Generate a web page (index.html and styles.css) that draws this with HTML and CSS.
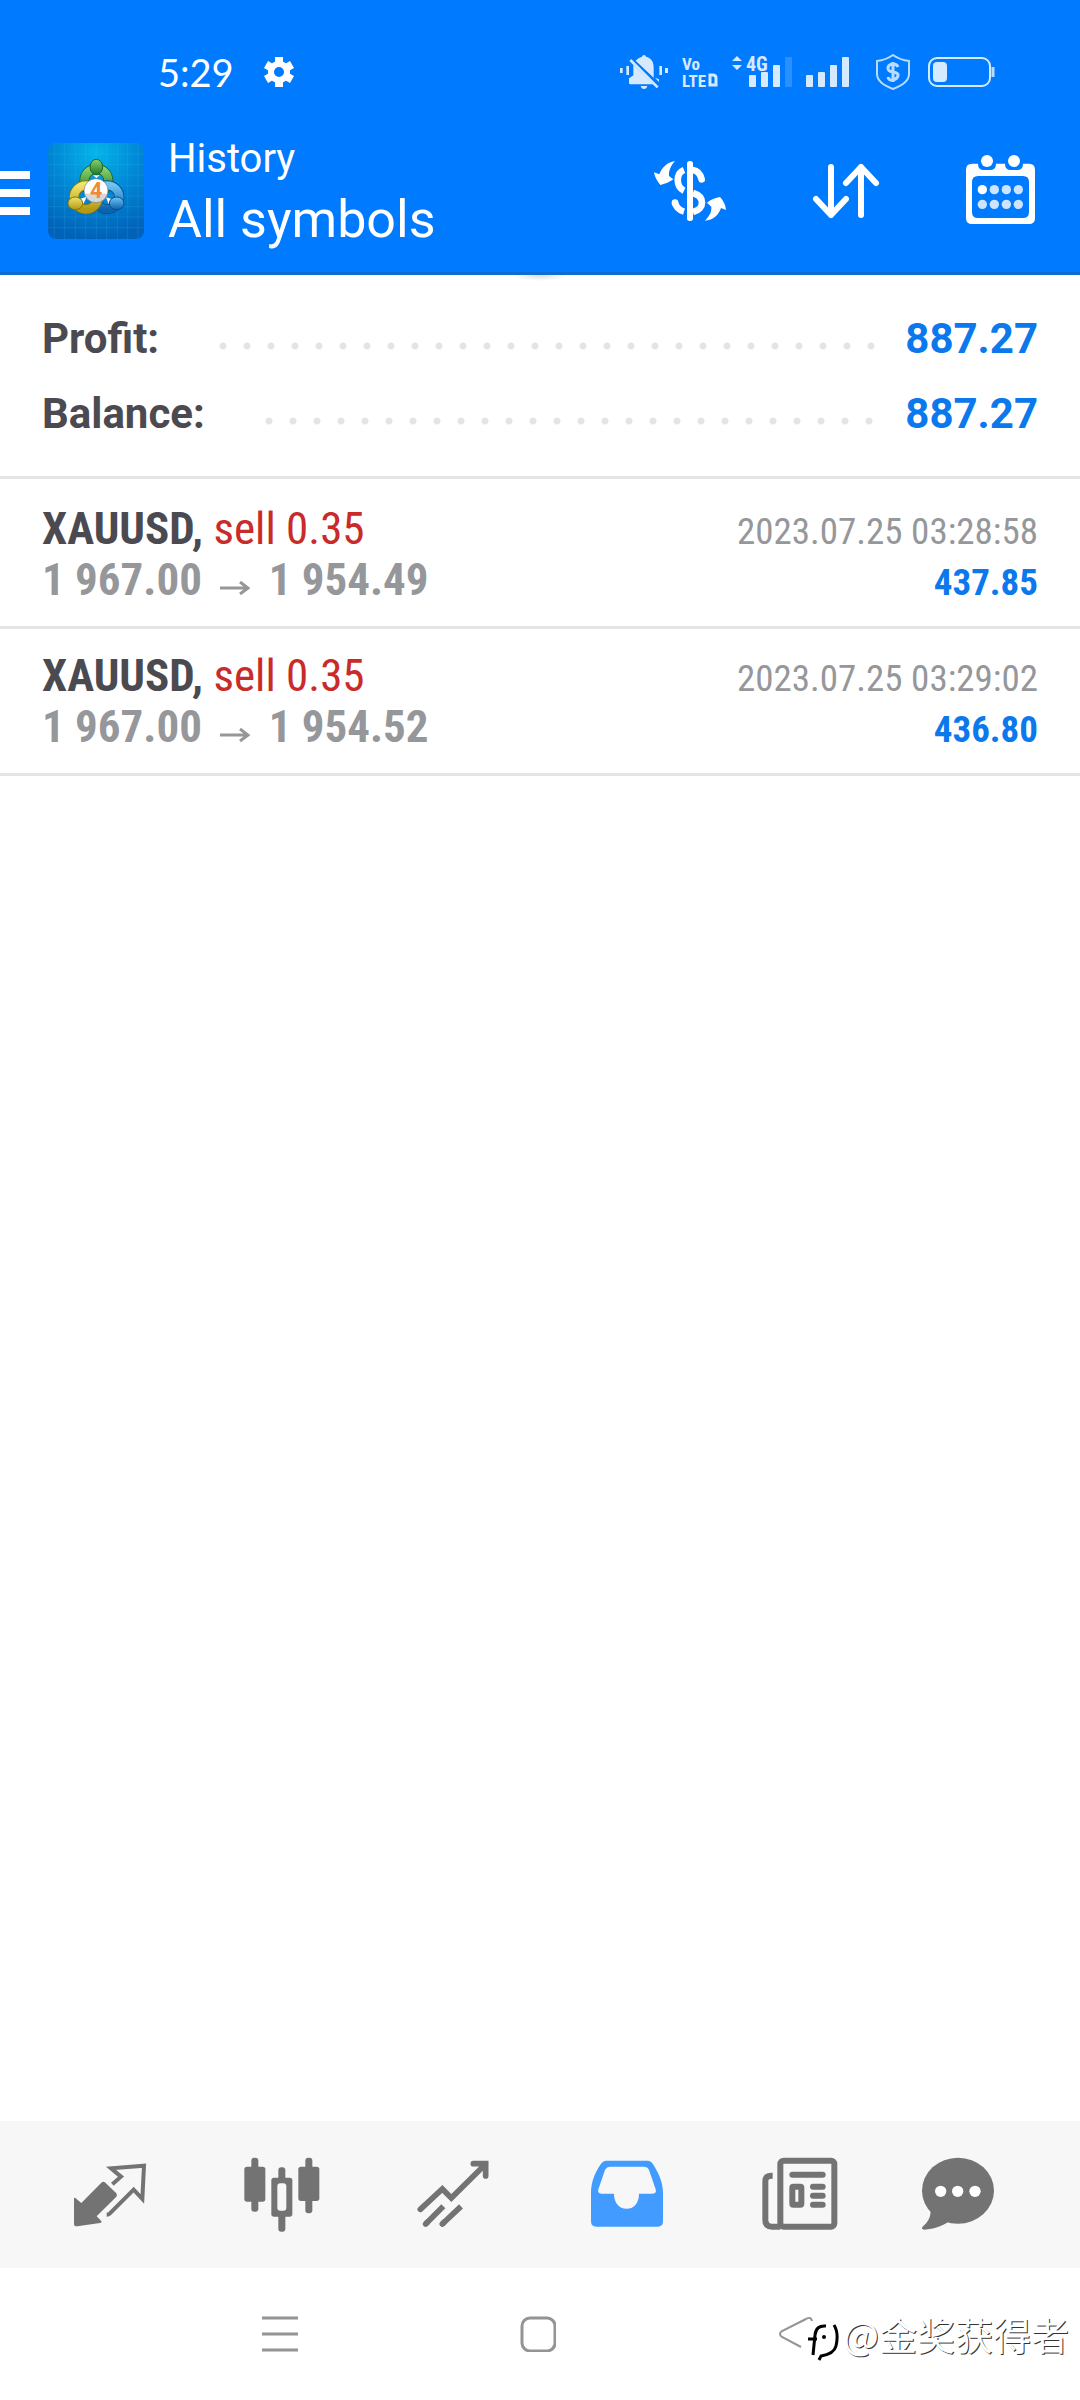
FILE: index.html
```html
<!DOCTYPE html>
<html lang="en">
<head>
    <meta charset="UTF-8">
    <meta name="viewport" content="width=device-width, initial-scale=1.0">
    <title>History</title>
    <link rel="stylesheet" href="styles.css">
</head>
<body>
    <header class="header">
        <div class="status-bar">
            <span class="clock">5:29</span>
            <svg class="gear" viewBox="0 0 30 30">
                <circle cx="15" cy="15" r="8" fill="none" stroke="#fff" stroke-width="6"/>
                <path d="M15 0V6M15 24V30M2 7.500L7.200 10.500M22.800 19.500L28 22.500M2 22.500L7.200 19.500M22.800 10.500L28 7.500" stroke="#fff" stroke-width="8"/>
            </svg>
            <div class="status-icons">
                <svg width="48" height="36" viewBox="60 72 144 108" fill="#d5eaff">
                    <rect x="60" y="114" width="8" height="15"/>
                    <rect x="79" y="108" width="8" height="27"/>
                    <rect x="178" y="108" width="8" height="27"/>
                    <rect x="195" y="114" width="9" height="15"/>
                    <path d="M107 92C112 86 119 82 126 80Q127 75 132 75T138 80C154 84 161 96 161 112V143ZM100 104L160 163H91Q87 163 87 158V145L100 136ZM165 143L177 148V156Z"/>
                    <path d="M91 90L173 172" stroke="#d5eaff" stroke-width="8"/>
                    <path d="M122 168H142Q140 177 132 177T122 168Z"/>
                </svg>
                <svg class="volte" width="36" height="36" viewBox="0 0 36 36">
                    <text x="0" y="16">Vo</text>
                    <text x="0" y="33">LTE</text>
                    <path d="M28 21H31Q34 21 34 24V31H28Z" fill="none" stroke="#d5eaff" stroke-width="3"/>
                </svg>
                <svg class="network" width="60" height="36" viewBox="0 0 60 36">
                    <path d="M0 7L5 2L10 7ZM0 11L5 16L10 11Z"/>
                    <text x="14" y="17">4G</text>
                    <rect x="17" y="21" width="7" height="12" rx="1"/>
                    <rect x="29" y="18" width="7" height="15" rx="1"/>
                    <rect x="41" y="11" width="7" height="22" rx="1"/>
                    <rect x="53" y="3" width="7" height="30" rx="1" opacity=".2"/>
                </svg>
                <svg width="43" height="36" viewBox="0 0 43 36" fill="#d5eaff">
                    <rect x="0" y="21" width="7" height="12" rx="1"/>
                    <rect x="12" y="18" width="7" height="15" rx="1"/>
                    <rect x="24" y="11" width="7" height="22" rx="1"/>
                    <rect x="36" y="3" width="7" height="30" rx="1"/>
                </svg>
                <svg class="shield" width="36" height="36" viewBox="0 0 36 36">
                    <path d="M18 1Q25 6 34 7V20C34 28 26 32 18 35C10 32 2 28 2 20V7Q11 6 18 1Z" fill="none" stroke="#b8dcff" stroke-width="2"/>
                    <path d="M23 13Q22 10 18 10T13 13.500T18 18T23 22T18 26T13 23M18 8V28" fill="none" stroke="#b8dcff" stroke-width="3"/>
                </svg>
                <svg width="67" height="36" viewBox="0 0 67 36">
                    <rect x="1" y="4" width="61" height="28" rx="8" fill="none" stroke="#d5eaff" stroke-width="2"/>
                    <rect x="5" y="8" width="14" height="20" rx="4" fill="#d5eaff"/>
                    <path d="M65 13V23" stroke="#b8dcff" stroke-width="3"/>
                </svg>
            </div>
        </div>
        <div class="toolbar">
            <button class="menu" aria-label="Menu">
                <svg width="30" height="44" viewBox="0 0 30 44"><path d="M0 4H30M0 22H30M0 40H30" stroke="#fff" stroke-width="8"/></svg>
            </button>
            <svg class="logo" viewBox="144 69 288 288">
                <defs>
                    <radialGradient id="sky" cx=".5" cy=".1" r=".9">
                        <stop offset="0" stop-color="#04b5ea"/>
                        <stop offset=".5" stop-color="#0087d6"/>
                        <stop offset="1" stop-color="#0062b8"/>
                    </radialGradient>
                    <linearGradient id="green" x2="0" y2="1"><stop offset="0" stop-color="#8bd06c"/><stop offset="1" stop-color="#1e7a2b"/></linearGradient>
                    <linearGradient id="yellow" x2="0" y2="1"><stop offset="0" stop-color="#f0e36a"/><stop offset="1" stop-color="#b39a12"/></linearGradient>
                    <linearGradient id="blue" x2="0" y2="1"><stop offset="0" stop-color="#6cc5f2"/><stop offset="1" stop-color="#0b63b0"/></linearGradient>
                    <linearGradient id="badge" x2="0" y2="1"><stop offset=".6" stop-color="#fff"/><stop offset=".65" stop-color="#d5d8da"/></linearGradient>
                </defs>
                <rect x="144" y="69" width="288" height="288" rx="24" fill="url(#sky)"/>
                <path d="M163 69V357M194 69V357M226 69V357M257 69V357M289 69V357M320 69V357M352 69V357M383 69V357M414 69V357M144 102H432M144 134H432M144 165H432M144 197H432M144 228H432M144 260H432M144 291H432M144 323H432" stroke="#4fc0ee" stroke-opacity=".25" stroke-width="2"/>
                <circle cx="289" cy="182" r="36" fill="none" stroke="#1d6428" stroke-width="30"/>
                <circle cx="289" cy="182" r="36" fill="none" stroke="url(#green)" stroke-width="25"/>
                <circle cx="322" cy="232" r="36" fill="none" stroke="#0a4d8c" stroke-width="30"/>
                <circle cx="322" cy="232" r="36" fill="none" stroke="url(#blue)" stroke-width="25"/>
                <circle cx="258" cy="232" r="36" fill="none" stroke="#857414" stroke-width="30"/>
                <circle cx="258" cy="232" r="36" fill="none" stroke="url(#yellow)" stroke-width="25"/>
                <path d="M242 236L260 230L250 252ZM318 232L337 238L326 252ZM279 166H299L289 174Z" fill="#fff"/>
                <ellipse cx="289" cy="141" rx="19" ry="23" fill="url(#green)" stroke="#1d6428" stroke-width="3"/>
                <ellipse cx="226" cy="250" rx="22" ry="19" fill="url(#yellow)" stroke="#857414" stroke-width="3"/>
                <ellipse cx="350" cy="250" rx="22" ry="19" fill="url(#blue)" stroke="#0a4d8c" stroke-width="3"/>
                <circle cx="288" cy="212" r="36" fill="url(#badge)" stroke="#777" stroke-width="2"/>
                <text class="logo-digit" x="288" y="235">4</text>
            </svg>
            <div class="titles">
                <div class="title">History</div>
                <h1 class="subtitle">All symbols</h1>
            </div>
            <button aria-label="Currency">
                <svg width="72" height="72" viewBox="102 75 216 216">
                    <rect x="201" y="93" width="18" height="180" rx="8" fill="#fff"/>
                    <path d="M192 120C167 130 167 170 192 182M165 218C168 232 175 240 192 245M219 189C255 200 255 236 219 246" fill="none" stroke="#fff" stroke-width="20"/>
                    <path d="M219 120C234 122 241 132 245 148M165 218V219M219 120" fill="none" stroke="#fff" stroke-width="20" stroke-linecap="round"/>
                    <path d="M165 93C150 110 146 125 147 138L160 148C145 158 135 162 121 165C110 152 104 140 102 127L118 133C126 112 140 98 165 93Z" fill="#fff"/>
                    <path d="M255 272C270 256 275 245 274 230L261 218C275 207 288 203 300 201C310 212 317 225 318 240L303 234C296 255 280 270 255 272Z" fill="#fff"/>
                </svg>
            </button>
            <button aria-label="Sort">
                <svg width="72" height="72" viewBox="570 75 216 216">
                    <path d="M633 111V255M588 207L633 255L678 207M723 255V111M678 159L723 111L768 159" fill="none" stroke="#fff" stroke-width="18" stroke-linecap="round" stroke-linejoin="round"/>
                </svg>
            </button>
            <button aria-label="Period">
                <svg width="72" height="72" viewBox="1038 75 216 216" fill="#fff">
                    <path fill-rule="evenodd" d="M1056 101H1074Q1074 120 1092 120H1110Q1128 120 1128 101H1155Q1155 120 1173 120H1191Q1209 120 1209 101H1227Q1245 101 1245 119V264Q1245 282 1227 282H1056Q1038 282 1038 264V119Q1038 101 1056 101ZM1074 138Q1056 138 1056 156V246Q1056 264 1074 264H1209Q1227 264 1227 246V156Q1227 138 1209 138Z"/>
                    <circle cx="1101" cy="93" r="18"/>
                    <circle cx="1182" cy="93" r="18"/>
                    <circle cx="1087" cy="179" r="14"/>
                    <g fill="#cce4ff">
                        <circle cx="1123" cy="179" r="14"/>
                        <circle cx="1159" cy="179" r="14"/>
                        <circle cx="1195" cy="179" r="14"/>
                        <circle cx="1087" cy="223" r="14"/>
                        <circle cx="1123" cy="223" r="14"/>
                        <circle cx="1159" cy="223" r="14"/>
                        <circle cx="1195" cy="223" r="14"/>
                    </g>
                </svg>
            </button>
        </div>
    </header>

    <main class="content">
        <div class="summary">
            <div class="summary-row">
                <span>Profit:</span>
                <span class="dots"></span>
                <span class="amount">887.27</span>
            </div>
            <div class="summary-row">
                <span>Balance:</span>
                <span class="dots"></span>
                <span class="amount">887.27</span>
            </div>
        </div>
        <ul class="deals">
            <li class="deal">
                <div class="deal-row">
                    <span class="symbol">XAUUSD, <span class="sell">sell 0.35</span></span>
                    <span class="time">2023.07.25 03:28:58</span>
                </div>
                <div class="deal-row">
                    <span class="price">1 967.00 <svg class="arrow" viewBox="0 0 30 14"><path d="M0 7H26M20 1L28 7L20 13" fill="none" stroke="#96979b" stroke-width="3"/></svg> 1 954.49</span>
                    <span class="profit">437.85</span>
                </div>
            </li>
            <li class="deal">
                <div class="deal-row">
                    <span class="symbol">XAUUSD, <span class="sell">sell 0.35</span></span>
                    <span class="time">2023.07.25 03:29:02</span>
                </div>
                <div class="deal-row">
                    <span class="price">1 967.00 <svg class="arrow" viewBox="0 0 30 14"><path d="M0 7H26M20 1L28 7L20 13" fill="none" stroke="#96979b" stroke-width="3"/></svg> 1 954.52</span>
                    <span class="profit">436.80</span>
                </div>
            </li>
        </ul>
    </main>

    <nav class="tabs">
        <button aria-label="Quotes">
            <svg viewBox="90 133 240 240">
                <path d="M102 264Q102 259 106 262L124 277L184 216Q190 210 196 216L229 248Q233 253 229 258L170 317L183 330Q187 335 180 337L112 347Q102 348 102 339Z" fill="#737373"/>
                <path d="M217 221L243 198L213 173L312 165L307 265L281 237L209 309Q206 312 200 312" fill="none" stroke="#737373" stroke-width="12"/>
            </svg>
        </button>
        <button aria-label="Charts">
            <svg viewBox="608 133 240 240" fill="#737373">
                <rect x="633" y="141" width="21" height="162" rx="9"/>
                <rect x="612" y="168" width="63" height="105" rx="8"/>
                <rect x="795" y="141" width="21" height="167" rx="9"/>
                <rect x="774" y="168" width="63" height="103" rx="8"/>
                <rect x="714" y="170" width="21" height="50" rx="9"/>
                <rect x="714" y="300" width="21" height="63" rx="9"/>
                <rect x="693" y="201" width="63" height="117" rx="8"/>
                <rect x="711" y="218" width="27" height="82" rx="9" fill="#f7f7f7"/>
            </svg>
        </button>
        <button aria-label="Trade">
            <svg viewBox="1126 133 240 240" fill="none" stroke="#737373" stroke-width="17" stroke-linecap="round">
                <path d="M1142 296L1208 235L1235 262L1338 160M1301 159H1338V196"/>
                <path d="M1158 340L1163 335M1208 340L1213 335"/>
                <path d="M1158 340L1211 287M1208 340L1264 287" stroke-linecap="butt"/>
            </svg>
        </button>
        <button aria-label="History">
            <svg viewBox="83 133 240 240">
                <path fill="#429bff" fill-rule="evenodd" d="M92 245C92 215 104 185 120 162Q128 150 138 150H262Q272 150 279 162C294 185 308 215 308 245V332Q308 348 292 348H108Q92 348 92 332ZM150 168Q139 168 134 178L114 236Q111 249 123 249H161C161 275 175 294 199 294C223 294 236 275 236 249H276Q290 249 286 236L266 178Q262 168 250 168Z"/>
            </svg>
        </button>
        <button aria-label="News">
            <svg viewBox="601 133 240 240" fill="none" stroke="#737373" stroke-width="18">
                <rect x="662" y="150" width="162" height="198" rx="10"/>
                <path d="M639 195H636Q617 195 617 211V328Q617 348 637 348H662"/>
                <rect x="698" y="228" width="27" height="54" rx="3"/>
                <path d="M698 192H789M760 228H789M760 255H789M760 282H789" stroke-linecap="round"/>
            </svg>
        </button>
        <button aria-label="Messages">
            <svg viewBox="1074 133 240 240" fill="#737373">
                <ellipse cx="1194" cy="240" rx="108" ry="99"/>
                <path d="M1112 298C1112 325 1100 337 1089 347Q1081 357 1093 357C1125 355 1145 346 1165 334Z"/>
                <g fill="#fff">
                    <circle cx="1142" cy="242" r="17"/>
                    <circle cx="1193" cy="242" r="17"/>
                    <circle cx="1245" cy="242" r="17"/>
                </g>
            </svg>
        </button>
    </nav>

    <footer class="system-nav">
        <button aria-label="Recent apps">
            <svg viewBox="0 0 36 36"><path d="M0 2H36M0 18H36M0 34H36" stroke="#949494" stroke-width="3"/></svg>
        </button>
        <button aria-label="Home">
            <svg viewBox="0 0 36 36"><rect x="2" y="2" width="33" height="33" rx="8" fill="none" stroke="#949494" stroke-width="3"/></svg>
        </button>
        <button aria-label="Back">
            <svg viewBox="0 0 36 36"><path d="M34 5Q33 0 28 3L4 15Q0 18 4 21L23 31" fill="none" stroke="#949494" stroke-width="2"/></svg>
        </button>
        <div class="watermark">
            <svg width="32" height="42" viewBox="0 0 32 42" fill="none">
                <path d="M19 3Q8 2 7 14L4 32M1 17H11M23 3Q31 6 28 19Q27 31 12 37" stroke="#fff" stroke-width="5"/>
                <path d="M19 5Q9 4 8 14L6 34M1 18H10M27 4Q32 12 29 25Q27 33 14 35L12 39" stroke="#000" stroke-width="3"/>
                <circle cx="17" cy="16" r="2" fill="#000"/>
            </svg>
            <span>@金奖获得者</span>
        </div>
    </footer>
</body>
</html>
```
FILE: styles.css
```css
* {
    box-sizing: border-box;
}
body {
    margin: 0;
    min-height: 100vh;
    display: flex;
    flex-direction: column;
    background: #fff;
    color: #4b4a50;
    font-family: Roboto, Arial, sans-serif;
}
button {
    display: flex;
    align-items: center;
    justify-content: center;
    padding: 0;
    border: none;
    background: none;
    cursor: pointer;
}
svg {
    display: block;
    flex-shrink: 0;
}

/* Header */
.header {
    position: relative;
    background: #007aff;
    border-bottom: 3px solid #0d6dd0;
    color: #fff;
}
.header::after {
    content: "";
    position: absolute;
    top: calc(100% + 3px);
    left: 50%;
    width: 56px;
    height: 6px;
    margin-left: -28px;
    background: radial-gradient(ellipse at top, #dcdcdc, #fff 70%);
}
.status-bar {
    display: flex;
    align-items: center;
    padding: 54px 85px 18px 158px;
}
.clock {
    font-family: Lato, sans-serif;
    font-size: 38px;
    line-height: 36px;
}
.gear {
    width: 30px;
    height: 30px;
    margin-left: 30px;
}
.status-icons {
    display: flex;
    gap: 14px;
    margin-left: auto;
}
.status-icons svg {
    overflow: visible;
}
.status-icons text {
    fill: #d5eaff;
    font-family: "Roboto Condensed", Roboto, sans-serif;
    font-weight: bold;
}
.volte text {
    font-size: 17px;
}
.network {
    fill: #d5eaff;
}
.network text {
    font-size: 20px;
}
.shield {
    margin: 0 3px 0 12px;
}
.toolbar {
    display: flex;
    align-items: center;
    gap: 84px;
    height: 164px;
    padding: 2px 42px 0 0;
}
.menu {
    margin-right: -66px;
    padding-top: 4px;
}
.logo {
    width: 96px;
    height: 96px;
    margin-right: -60px;
}
.logo-digit {
    fill: #f08a35;
    font-size: 64px;
    font-weight: bold;
    text-anchor: middle;
}
.titles {
    flex: 1;
    padding-top: 4px;
}
.title {
    font-size: 40px;
    line-height: 54px;
}
.subtitle {
    margin: 0;
    font-size: 52px;
    font-weight: normal;
    line-height: 68px;
}

/* Totals */
.content {
    flex: 1;
}
.summary {
    padding: 26px 42px 25px;
    border-bottom: 3px solid #e4e4e4;
}
.summary-row {
    display: flex;
    font-size: 42px;
    font-weight: bold;
    line-height: 75px;
}
.dots {
    flex: 1;
    margin: 0 21px 0 52px;
    background: radial-gradient(circle at 12px 45px, #e4e4e4 3px, transparent 4px) repeat-x;
    background-size: 24px 75px;
}
.amount,
.profit {
    color: #0b78ec;
}

/* Deals */
.deals {
    margin: 0;
    padding: 3px 0 0;
    list-style: none;
}
.deal {
    padding: 21px 42px;
    border-bottom: 3px solid #e4e4e4;
    font-family: "Roboto Condensed", Roboto, sans-serif;
}
.deal-row {
    display: flex;
    align-items: baseline;
    justify-content: space-between;
    height: 51px;
    line-height: 51px;
}
.symbol,
.price {
    font-size: 45px;
    font-weight: bold;
}
.sell {
    color: #c92a2a;
    font-weight: normal;
}
.price,
.time {
    color: #96979b;
}
.arrow {
    display: inline-block;
    width: 30px;
    height: 14px;
    margin: 0 8px;
}
.time,
.profit {
    font-size: 37px;
}
.profit {
    font-weight: bold;
}

/* Bottom tabs */
.tabs {
    display: grid;
    grid-template-columns: repeat(5, 6fr) 5fr;
    height: 147px;
    padding: 0 50px 0 24px;
    background: #f7f7f7;
}
.tabs svg {
    width: 80px;
    height: 80px;
}
.system-nav {
    position: relative;
    display: flex;
    align-items: center;
    justify-content: space-between;
    height: 132px;
    padding: 0 266px 0 262px;
}
.system-nav button svg {
    width: 36px;
    height: 36px;
}
.watermark {
    position: absolute;
    right: 11px;
    bottom: 37px;
    display: flex;
    align-items: flex-end;
    gap: 4px;
    color: #fff;
    font-family: "Noto Sans CJK SC", sans-serif;
    font-size: 38px;
    line-height: 58px;
    text-shadow: 1px 1px 0 #333;
}
```
